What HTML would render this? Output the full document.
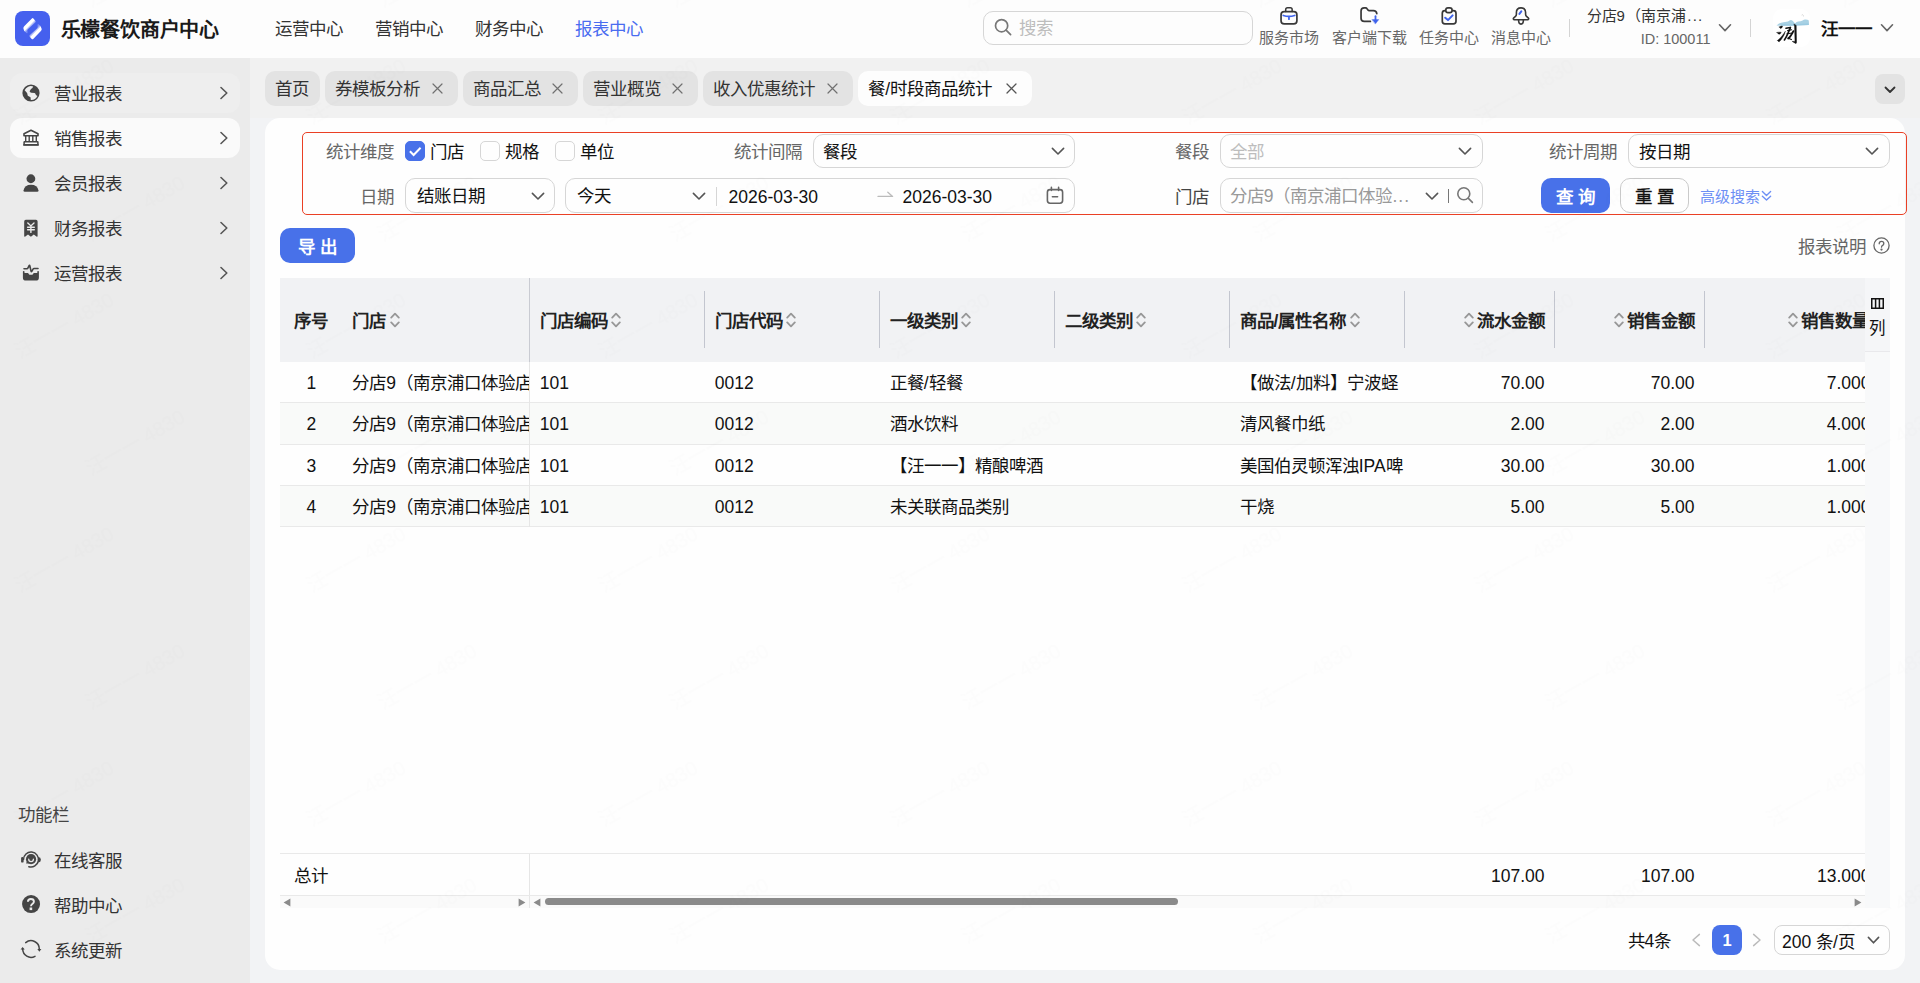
<!DOCTYPE html>
<html lang="zh-CN">
<head>
<meta charset="utf-8">
<title>餐/时段商品统计</title>
<style>
*{box-sizing:border-box;margin:0;padding:0}
html,body{width:1920px;height:983px;overflow:hidden}
body{text-spacing-trim:space-all;font-family:"Liberation Sans",sans-serif;font-size:17.5px;color:#222;background:#f1f1f1;position:relative}
.abs{position:absolute}
svg{display:block}
/* ---------- header ---------- */
#hdr{position:absolute;left:0;top:0;width:1920px;height:58px;background:#fdfdfd}
#logo{position:absolute;left:15px;top:10.7px;width:35px;height:35.3px;border-radius:8px;background:#4560ee}
#brand{position:absolute;left:60.5px;top:12.8px;height:35px;line-height:35px;font-size:20px;font-weight:bold;color:#1a1a1a;letter-spacing:-0.2px;white-space:nowrap}
.nav{position:absolute;top:11.8px;height:35px;line-height:35px;font-size:17.5px;color:#333;white-space:nowrap}
.nav.on{color:#4a6cf0}
#search{position:absolute;left:983px;top:11px;width:270px;height:34px;border:1px solid #d6d6d6;border-radius:10px;background:#fdfdfd}
#search span{position:absolute;left:35px;top:.2px;line-height:32px;color:#bdbdbd;font-size:17.5px}
.hi{position:absolute;top:0;height:58px;text-align:center;font-size:15px;color:#666;white-space:nowrap}
.hi svg{position:absolute;top:6px;left:50%;margin-left:-10px}
.hi span{position:absolute;left:0;right:0;top:28px;line-height:20px;color:#686868}
.vdiv{position:absolute;top:19px;width:1px;height:18px;background:#d4d4d4}
/* ---------- sidebar ---------- */
#side{position:absolute;left:0;top:58px;width:250px;height:925px;background:#ebebeb}
.mi{position:absolute;left:10px;width:230px;height:40px;border-radius:12px;line-height:40px;color:#333;font-size:17.5px}
.mi .ic{position:absolute;left:10.5px;top:10.25px;width:20px;height:20px}
.mi .tx{position:absolute;left:43.5px;top:.75px}
.mi .ar{position:absolute;left:208.8px;top:13.3px}
.mi.hov{background:#eeeeee}
.mi.act{background:#fafafa}
/* ---------- tabs ---------- */
.tab{position:absolute;top:71px;height:35px;line-height:37px;border-radius:10px;background:#e3e3e3;color:#333;padding-left:10.3px;font-size:17.5px;white-space:nowrap}
.tab.on{background:#fdfdfd;color:#111}
.tab svg{position:absolute;right:15px;top:12px}
/* ---------- content ---------- */
#cbg{position:absolute;left:250px;top:118px;width:1670px;height:865px;background:#f2f3f5}
#card{position:absolute;left:265px;top:118px;width:1640px;height:852px;background:#fefefe;border-radius:15px}

/* ---------- filter ---------- */
#fbox{position:absolute;left:302px;top:132px;width:1605px;height:83px;border:1px solid #ea4025;border-radius:5px}
.lb{position:absolute;height:34px;line-height:34px;font-size:17.5px;color:#666;white-space:nowrap;text-align:right}
.sel{position:absolute;height:34px;border:1px solid #d6d6d6;border-radius:10px;background:#fefefe;line-height:32px;font-size:17.5px;color:#111;white-space:nowrap}
.sel .t{position:absolute;left:10.5px;top:0}
.sel.r1 .t{top:1px}
.sel.r2 .t{top:1.3px}
.sel.r1 .cv{top:12.4px}
.sel.r2 .cv{top:12.4px}
.sel .cv{position:absolute;top:12px}
.cb{position:absolute;top:141px;width:20px;height:20px;border:1px solid #d6d6d6;border-radius:5px;background:#fefefe}
.cb.on{background:#4871e9;border-color:#4871e9}
.cbt{position:absolute;top:134.75px;line-height:34px;font-size:17.5px;color:#111}
.btn{position:absolute;height:35px;line-height:38.5px;border-radius:10px;font-size:17.5px;font-weight:bold;text-align:center;white-space:pre}
.btn.pri{background:#4871e9;color:#fff}
.btn.def{background:#fefefe;border:1px solid #cacaca;color:#111;line-height:36.5px;font-weight:normal;-webkit-text-stroke:.4px #111}

/* ---------- table ---------- */
#thead{position:absolute;left:280px;top:278px;width:1584.5px;height:84px;background:#f1f2f4;overflow:hidden}
.th{position:absolute;top:0;height:84px;line-height:86.2px;font-size:17.5px;font-weight:bold;color:#222;white-space:nowrap}
.th.r{text-align:right}
.srt{display:inline-block;width:10px;height:16px;vertical-align:-.5px;margin:0 3px 0 3.6px}
.csep{position:absolute;top:13px;width:1px;height:57px;background:#c3c6cf}
#tbody{position:absolute;left:280px;top:362px;width:1584.5px;height:165px;overflow:hidden}
.tr{position:absolute;left:0;width:1584.5px;height:41.25px;border-bottom:1px solid #e9e9e9;background:#fefefe}
.tr.alt{background:#f9faf9}
.td{position:absolute;top:0;height:41px;line-height:43.5px;font-size:17.5px;color:#111;white-space:nowrap;overflow:hidden}
.td.r{text-align:right}
.td.c{text-align:center}
#tfoot{position:absolute;left:280px;top:853px;width:1584.5px;height:42.5px;border-top:1px solid #e9e9e9;border-bottom:1px solid #e9e9e9;overflow:hidden}
#tfoot .td{line-height:44.2px}
#colset{position:absolute;left:1864.5px;top:278px;width:25.5px;height:630px;background:#f8f9fa}
#colset .top{position:absolute;left:0;top:0;width:25.5px;height:74px;background:#f5f6f8;border-bottom:1px solid #e9e9ec}
</style>
</head>
<body>
<div id="hdr">
  <div id="logo"><svg width="35" height="35" viewBox="0 0 35 35">
    <defs><linearGradient id="lg1" gradientUnits="userSpaceOnUse" x1="13" y1="11.4" x2="16.8" y2="15.1"><stop offset="0" stop-color="#fff"/><stop offset=".58" stop-color="#fff"/><stop offset=".64" stop-color="#fff" stop-opacity=".8"/><stop offset="1" stop-color="#fff" stop-opacity=".3"/></linearGradient>
    <linearGradient id="lg2" gradientUnits="userSpaceOnUse" x1="23.6" y1="23.9" x2="19.1" y2="19.4"><stop offset="0" stop-color="#fff"/><stop offset=".45" stop-color="#fff"/><stop offset="1" stop-color="#fff" stop-opacity=".25"/></linearGradient></defs>
    <path id="lf" d="M16.9 7.4 Q17.65 6.7 18.4 7.5 L20.5 9.9 Q21.2 10.7 20.4 11.4 L12.9 18.2 Q12.4 18.7 12.45 19.6 L12.5 21.6 Q12.5 22.6 11.6 22.1 Q8.6 20.4 8.4 17.4 Q8.3 16.2 9.2 15.3Z" fill="url(#lg1)"/>
    <path d="M16.9 7.4 Q17.65 6.7 18.4 7.5 L20.5 9.9 Q21.2 10.7 20.4 11.4 L12.9 18.2 Q12.4 18.7 12.45 19.6 L12.5 21.6 Q12.5 22.6 11.6 22.1 Q8.6 20.4 8.4 17.4 Q8.3 16.2 9.2 15.3Z" fill="url(#lg1)" transform="rotate(180 17.55 17.7)"/>
  </svg></div>
  <div id="brand">乐檬餐饮商户中心</div>
  <div class="nav" style="left:275px">运营中心</div>
  <div class="nav" style="left:375px">营销中心</div>
  <div class="nav" style="left:475px">财务中心</div>
  <div class="nav on" style="left:575px">报表中心</div>
  <div id="search">
    <svg class="abs" style="left:10.3px;top:6.4px" width="18" height="18" viewBox="0 0 18 18" fill="none" stroke="#777" stroke-width="1.7" stroke-linecap="round"><circle cx="7.6" cy="7.7" r="6.1"/><path d="M12.1 12.2 L16.6 16.7"/></svg>
    <span>搜索</span>
  </div>
  <div class="hi" style="left:1259px;width:60px">
    <svg width="20" height="20" viewBox="0 0 20 20" fill="none" stroke="#383838" stroke-width="1.7" stroke-linejoin="round" stroke-linecap="round"><rect x="2.05" y="5.7" width="15.85" height="12.15" rx="3.2"/><path d="M6.7 5.6 V3.6 Q6.7 1.8 8.5 1.8 H11.4 Q13.15 1.8 13.15 3.6 V5.6" stroke-width="1.5"/><path d="M4.3 9.5 Q9.9 11.3 15.7 9.5 M9.95 10.8 V13.2" stroke="#3f63ec" stroke-width="1.8"/></svg>
    <span>服务市场</span></div>
  <div class="hi" style="left:1331.5px;width:75px">
    <svg width="20" height="20" viewBox="0 0 20 20" style="overflow:visible" fill="none" stroke="#383838" stroke-width="1.7" stroke-linejoin="round" stroke-linecap="round"><path d="M11.4 15.4 H5.2 Q2.05 15.4 2.05 12.2 V5 Q2.05 1.9 5.2 1.9 H6.4 Q7.6 1.9 8.2 2.9 L9.2 4.3 Q9.5 4.7 10.2 4.7 H14.4 Q17.4 4.7 17.8 7.6"/><path d="M16.5 10.2 V15" stroke="#3f63ec" stroke-width="1.8"/><path d="M13.2 13.6 H19.8 L16.5 17.8Z" fill="#3f63ec" stroke="#3f63ec" stroke-width=".4"/></svg>
    <span>客户端下载</span></div>
  <div class="hi" style="left:1419px;width:60px">
    <svg width="20" height="20" viewBox="0 0 20 20" fill="none" stroke="#383838" stroke-width="1.7" stroke-linejoin="round" stroke-linecap="round"><rect x="3.3" y="4.6" width="13.7" height="13.3" rx="2.6"/><rect x="6.8" y="1.9" width="6.25" height="4.7" rx="2.2" fill="#fdfdfd"/><path d="M6.2 11.7 L9 14.1 L13.6 9.4" stroke="#3f63ec" stroke-width="2"/></svg>
    <span>任务中心</span></div>
  <div class="hi" style="left:1491px;width:60px">
    <svg width="20" height="20" viewBox="0 0 20 20" fill="none" stroke="#383838" stroke-width="1.6" stroke-linejoin="round" stroke-linecap="round"><path d="M10 1.9 Q5.4 1.9 5.4 6.6 V8.2 Q5.4 9.6 4.2 10.6 L2.8 11.8 Q1.8 12.8 2.8 13.5 Q3.2 13.75 4 13.75 H16 Q16.8 13.75 17.2 13.5 Q18.2 12.8 17.2 11.8 L15.8 10.6 Q14.6 9.6 14.6 8.2 V6.6 Q14.6 1.9 10 1.9Z"/><path d="M7.6 14 Q7.6 18.1 10 18.1 Q12.4 18.1 12.4 14"/><path d="M10.3 5.4 L8.4 7.9" stroke="#3f63ec" stroke-width="2"/></svg>
    <span>消息中心</span></div>
  <div class="vdiv" style="left:1569px"></div>
  <div class="abs" style="left:1586.5px;top:5.2px;line-height:21px;font-size:15px;color:#333;white-space:nowrap">分店9<span style="margin-left:1.5px">（南京浦</span><span style="letter-spacing:1.2px;margin-left:1px">...</span></div>
  <div class="abs" style="right:209.5px;top:29.3px;line-height:21px;font-size:14.5px;color:#666;white-space:nowrap">ID: 100011</div>
  <svg class="abs" style="left:1718px;top:23px" width="14" height="10" viewBox="0 0 14 10" fill="none" stroke="#666" stroke-width="1.6" stroke-linecap="round" stroke-linejoin="round"><path d="M1.5 1.8 L7 7.6 L12.5 1.8"/></svg>
  <div class="vdiv" style="left:1750px"></div>
  <div class="abs" style="left:1773px;top:9px;width:36.5px;height:38px;border-radius:9px;background:#fff;overflow:hidden">
    <svg width="36.5" height="38" viewBox="0 0 36.5 38">
      <path d="M3.5 16.5 L6 14.6 Q8 13.4 10.5 13.2 L15 12.6 Q16.6 11.2 17.9 11.1 Q19.4 11.4 20.3 12.6 L22 14.4 Q23.6 12.8 25.2 12.6 Q27.6 12.4 29.6 11.6 Q30.8 10.7 32 10.6 Q34 10.4 35.4 11.1 Q36 12.2 35.9 13.5 V16 Q30 16.4 24 16.6 Q14 17 3.5 16.5Z" fill="#a8d1e4"/>
      <path d="M8 15.4 Q16 14.6 22 15.6 Q30 14.4 35.8 14.6 V16 Q22 17 8 16.7Z" fill="#96c8df" opacity=".7"/>
      <path d="M28.6 6.2 L29.6 5.6 L30.2 6.6 M30 6.8 L31 7.2" stroke="#bbb" stroke-width=".5" fill="none"/>
      <g fill="#111" stroke="#111" stroke-linecap="round" stroke-linejoin="round">
        <path d="M6.4 18 Q8 16.6 9.6 17.2 Q9.4 18.8 7.6 19.6 Q6.8 19 6.4 18Z" stroke-width=".4"/>
        <path d="M4 23.4 Q6 23 8.2 23.2 Q7.6 25 6.2 25.3 Q4.8 24.8 4 23.4Z" stroke-width=".4"/>
        <path d="M4.6 31.4 Q7 29.6 9 27 Q10.8 24.6 12.4 22.2 Q11.6 25.6 9.6 28.6 Q8 31.4 6.2 32.8 Q5 32.6 4.6 31.4Z" stroke-width=".4"/>
        <path d="M13 19.3 L17.4 18.4" stroke-width="1.5" fill="none"/>
        <path d="M17.4 18.6 Q15.6 23 14 26.4 Q12.8 29 11.4 31" stroke-width="1.6" fill="none"/>
        <path d="M20.4 22.2 Q18.8 25.4 17.4 27.2 Q16.4 28.6 15.2 29.4" stroke-width="1.9" fill="none"/>
        <path d="M14.6 21.6 L18.6 20.8 M14 24.8 L19.6 24 M15.4 29.2 L18.4 30.6" stroke-width="1.1" fill="none"/>
        <path d="M21.2 15.2 L23.2 16.4 L23.5 33.4 Q23.4 34.6 22.6 34.4 L19.2 32.4 L22 32.4 L21.6 17.4Z" stroke-width=".5"/>
      </g>
    </svg>
  </div>
  <div class="abs" style="left:1820.5px;top:11.7px;line-height:35px;font-size:17.5px;font-weight:bold;color:#111;white-space:nowrap">汪一一</div>
  <svg class="abs" style="left:1880px;top:23px" width="14" height="10" viewBox="0 0 14 10" fill="none" stroke="#666" stroke-width="1.6" stroke-linecap="round" stroke-linejoin="round"><path d="M1.5 1.8 L7 7.6 L12.5 1.8"/></svg>
</div>
<div id="side">
  <div class="mi hov" style="top:15px">
    <svg class="ic" viewBox="0 0 20 20"><circle cx="10" cy="10" r="8.6" fill="#454545"/><path d="M3.65 7.25 A6.9 6.9 0 0 1 12.2 3.5 L11.4 5 L10 6 L8.6 8.2 Q8.8 9.6 10.4 9.7 L13.6 9.9 Q14.6 10.4 14.9 12 L16.4 13 A6.9 6.9 0 0 1 9.8 16.9 L9.5 14.3 L6.8 12.8 L6.1 10 Z" fill="#eeeeee"/></svg>
    <span class="tx">营业报表</span>
    <svg class="ar" width="10" height="14" viewBox="0 0 10 14" fill="none" stroke="#555" stroke-width="1.6" stroke-linecap="round" stroke-linejoin="round"><path d="M2 1.5 L7.8 7 L2 12.5"/></svg>
  </div>
  <div class="mi act" style="top:60px">
    <svg class="ic" viewBox="0 0 20 20" fill="none" stroke="#454545" stroke-linejoin="round" stroke-linecap="round"><path d="M10 2.3 L17 5.7 V7.7 H3 V5.7Z" stroke-width="1.6"/><path d="M4.7 8 V13.4 M8.2 8 V13.4 M11.8 8 V13.4 M15.3 8 V13.4" stroke-width="1.4" stroke-linecap="butt"/><rect x="3.1" y="13.8" width="13.8" height="3" rx=".5" stroke-width="1.5"/><path d="M3 16.9 H17" stroke-width="1.9"/></svg>
    <span class="tx">销售报表</span>
    <svg class="ar" width="10" height="14" viewBox="0 0 10 14" fill="none" stroke="#555" stroke-width="1.6" stroke-linecap="round" stroke-linejoin="round"><path d="M2 1.5 L7.8 7 L2 12.5"/></svg>
  </div>
  <div class="mi" style="top:105px">
    <svg class="ic" viewBox="0 0 20 20"><circle cx="9.9" cy="5.75" r="4.4" fill="#454545"/><path d="M2.5 17.4 Q3.6 11.7 10 11.7 Q16.4 11.7 17.5 17.4 Q17.6 18.7 16.2 18.7 H3.8 Q2.4 18.7 2.5 17.4Z" fill="#454545"/></svg>
    <span class="tx">会员报表</span>
    <svg class="ar" width="10" height="14" viewBox="0 0 10 14" fill="none" stroke="#555" stroke-width="1.6" stroke-linecap="round" stroke-linejoin="round"><path d="M2 1.5 L7.8 7 L2 12.5"/></svg>
  </div>
  <div class="mi" style="top:150px">
    <svg class="ic" viewBox="0 0 20 20"><path d="M3.2 3.4 Q3.2 1.8 4.8 1.8 H15 Q16.6 1.8 16.6 3.4 V18 Q16.6 18.9 15.8 18.7 L12.8 16.4 L9.9 18.8 L7 16.4 L4 18.7 Q3.2 18.9 3.2 18Z" fill="#454545"/><path d="M6.8 5 L9.9 7.9 L13 5 M9.9 7.9 V14.4 M6.6 9.3 H13.3 M6.6 11.8 H13.3" fill="none" stroke="#ebebeb" stroke-width="1.4" stroke-linecap="round"/></svg>
    <span class="tx">财务报表</span>
    <svg class="ar" width="10" height="14" viewBox="0 0 10 14" fill="none" stroke="#555" stroke-width="1.6" stroke-linecap="round" stroke-linejoin="round"><path d="M2 1.5 L7.8 7 L2 12.5"/></svg>
  </div>
  <div class="mi" style="top:195px">
    <svg class="ic" viewBox="0 0 20 20"><path d="M1.9 8.6 Q1.9 7.9 2.7 7.9 Q3.5 7.9 3.5 8.6 V10 H7 L8.4 11.8 H11.4 L12.8 10 H16.3 V8.6 Q16.3 7.9 17.1 7.9 Q17.9 7.9 17.9 8.6 V14.4 Q17.9 17.6 14.7 17.6 H5.1 Q1.9 17.6 1.9 14.4Z" fill="#454545"/><path d="M3 5.75 H6 Q6.6 5.75 7 4.9 L8.1 2.6 Q8.5 1.9 8.8 2.8 L10.1 8.4 Q10.3 9.2 10.8 8.4 L12.2 5.9 Q12.5 5.45 13 5.45 H17" fill="none" stroke="#454545" stroke-width="1.6" stroke-linecap="round" stroke-linejoin="round"/></svg>
    <span class="tx">运营报表</span>
    <svg class="ar" width="10" height="14" viewBox="0 0 10 14" fill="none" stroke="#555" stroke-width="1.6" stroke-linecap="round" stroke-linejoin="round"><path d="M2 1.5 L7.8 7 L2 12.5"/></svg>
  </div>
  <div class="abs" style="left:17.7px;top:745px;line-height:24px;font-size:17.5px;color:#444">功能栏</div>
  <div class="mi" style="top:782px">
    <svg class="ic" viewBox="0 0 20 20" style="overflow:visible"><path d="M2.5 9.5 A7.5 7.5 0 1 1 7.8 16.7" fill="none" stroke="#454545" stroke-width="1.5" stroke-linecap="round"/><rect x=".1" y="7" width="2.5" height="5.6" rx="1.2" fill="#454545"/><path d="M17.3 6.9 Q19.9 7.2 19.9 9.7 Q19.9 12.2 17.3 12.5Z" fill="#454545"/><circle cx="10.05" cy="9.2" r="5.1" fill="#454545"/><path d="M5.8 11.4 L5.1 13.6 L8.4 13.6Z" fill="#454545"/><path d="M7.7 9.2 Q7.7 11.5 10.05 11.5 Q12.4 11.5 12.4 9.2" fill="none" stroke="#ebebeb" stroke-width="1.25" stroke-linecap="round"/></svg>
    <span class="tx">在线客服</span>
  </div>
  <div class="mi" style="top:827px">
    <svg class="ic" viewBox="0 0 20 20" style="overflow:visible"><circle cx="10.05" cy="9.1" r="9" fill="#454545"/><path d="M6.9 6.8 Q7 4 9.9 4 Q12.9 4 12.9 6.5 Q12.9 7.6 11.8 8.6 Q10 10 9.95 11.2" fill="none" stroke="#ebebeb" stroke-width="1.9" stroke-linecap="butt"/><rect x="8.6" y="12.5" width="2.6" height="2.6" fill="#ebebeb"/></svg>
    <span class="tx">帮助中心</span>
  </div>
  <div class="mi" style="top:872px">
    <svg class="ic" viewBox="0 0 20 20" style="overflow:visible" fill="none" stroke="#454545" stroke-width="1.5" stroke-linecap="round"><path d="M4.7 2.6 A8.3 8.3 0 0 1 18.3 9.1"/><path d="M1.7 9.1 A8.3 8.3 0 0 0 14 16.3"/><path d="M16.3 9.1 H20.4 L18.35 11.7Z" fill="#454545" stroke="none"/><path d="M-.4 9.4 H3.7 L1.65 6.9Z" fill="#454545" stroke="none"/></svg>
    <span class="tx">系统更新</span>
  </div>
</div>
<!-- tabs -->
<div class="tab" style="left:265px;width:55px">首页</div>
<div class="tab" style="left:325px;width:133px">券模板分析<svg width="11" height="11" viewBox="0 0 11 11" stroke="#707070" stroke-width="1.2" stroke-linecap="round"><path d="M1 1 L10 10 M10 1 L1 10"/></svg></div>
<div class="tab" style="left:463px;width:115px">商品汇总<svg width="11" height="11" viewBox="0 0 11 11" stroke="#707070" stroke-width="1.2" stroke-linecap="round"><path d="M1 1 L10 10 M10 1 L1 10"/></svg></div>
<div class="tab" style="left:583px;width:115px">营业概览<svg width="11" height="11" viewBox="0 0 11 11" stroke="#707070" stroke-width="1.2" stroke-linecap="round"><path d="M1 1 L10 10 M10 1 L1 10"/></svg></div>
<div class="tab" style="left:703px;width:150px">收入优惠统计<svg width="11" height="11" viewBox="0 0 11 11" stroke="#707070" stroke-width="1.2" stroke-linecap="round"><path d="M1 1 L10 10 M10 1 L1 10"/></svg></div>
<div class="tab on" style="left:858px;width:174px">餐/时段商品统计<svg width="11" height="11" viewBox="0 0 11 11" stroke="#555" stroke-width="1.3" stroke-linecap="round"><path d="M1 1 L10 10 M10 1 L1 10"/></svg></div>
<div class="abs" style="left:1875px;top:74px;width:30px;height:30px;border-radius:8px;background:#e3e3e3">
  <svg class="abs" style="left:9px;top:12px" width="12" height="8" viewBox="0 0 12 8" fill="none" stroke="#333" stroke-width="1.8" stroke-linecap="round" stroke-linejoin="round"><path d="M1.5 1.5 L6 6 L10.5 1.5"/></svg>
</div>
<div id="cbg"></div>
<div id="card"></div>
<div id="fbox"></div>
<!-- filter row 1 -->
<div class="lb" style="left:299.5px;width:94.5px;top:134.75px">统计维度</div>
<div class="cb on" style="left:405px"><svg width="18" height="18" viewBox="0 0 18 18" fill="none" stroke="#fff" stroke-width="2" stroke-linecap="butt" stroke-linejoin="miter"><path d="M3.9 9.3 L7.6 13 L14.6 5.7"/></svg></div>
<div class="cbt" style="left:429.75px">门店</div>
<div class="cb" style="left:480px"></div>
<div class="cbt" style="left:504.75px">规格</div>
<div class="cb" style="left:555px"></div>
<div class="cbt" style="left:579.75px">单位</div>
<div class="lb" style="left:699.5px;width:102.5px;top:134.75px">统计间隔</div>
<div class="sel r1" style="left:813px;top:133.6px;width:262px"><span class="t" style="left:9px">餐段</span><svg class="cv" style="left:236.5px" width="14" height="9" viewBox="0 0 14 9" fill="none" stroke="#555" stroke-width="1.6" stroke-linecap="round" stroke-linejoin="round"><path d="M1.4 1.4 L7 7 L12.6 1.4"/></svg></div>
<div class="lb" style="left:1109px;width:99.5px;top:134.75px">餐段</div>
<div class="sel r1" style="left:1220px;top:133.6px;width:263px"><span class="t" style="left:8.5px;color:#bdbdbd">全部</span><svg class="cv" style="left:236.5px" width="14" height="9" viewBox="0 0 14 9" fill="none" stroke="#555" stroke-width="1.6" stroke-linecap="round" stroke-linejoin="round"><path d="M1.4 1.4 L7 7 L12.6 1.4"/></svg></div>
<div class="lb" style="left:1519.5px;width:97px;top:134.75px">统计周期</div>
<div class="sel r1" style="left:1627.5px;top:133.6px;width:262.5px"><span class="t">按日期</span><svg class="cv" style="left:236.5px" width="14" height="9" viewBox="0 0 14 9" fill="none" stroke="#555" stroke-width="1.6" stroke-linecap="round" stroke-linejoin="round"><path d="M1.4 1.4 L7 7 L12.6 1.4"/></svg></div>
<!-- filter row 2 -->
<div class="lb" style="left:299px;width:94.5px;top:179.6px">日期</div>
<div class="sel r2" style="left:405px;top:178.2px;width:150px;height:34.4px"><span class="t">结账日期</span><svg class="cv" style="left:124.5px" width="14" height="9" viewBox="0 0 14 9" fill="none" stroke="#555" stroke-width="1.6" stroke-linecap="round" stroke-linejoin="round"><path d="M1.4 1.4 L7 7 L12.6 1.4"/></svg></div>
<div class="sel r2" style="left:565px;top:178.2px;width:510px;height:34.4px"><span class="t">今天</span><svg class="cv" style="left:125.7px" width="14" height="9" viewBox="0 0 14 9" fill="none" stroke="#555" stroke-width="1.6" stroke-linecap="round" stroke-linejoin="round"><path d="M1.4 1.4 L7 7 L12.6 1.4"/></svg>
  <div class="abs" style="left:150px;top:7.5px;width:1px;height:19px;background:#d6d6d6"></div>
  <span class="abs" style="left:162.5px;top:1.6px;color:#111">2026-03-30</span>
  <svg class="abs" style="left:311px;top:10px" width="17" height="10" viewBox="0 0 17 10" fill="none" stroke="#bbb" stroke-width="1.3" stroke-linecap="round" stroke-linejoin="round"><path d="M1 7.4 H15.6 L10.8 3.2"/></svg>
  <span class="abs" style="left:336.5px;top:1.6px;color:#111">2026-03-30</span>
  <svg class="abs" style="left:480px;top:7px" width="18" height="19" viewBox="0 0 18 19" fill="none" stroke="#666" stroke-width="1.6" stroke-linecap="round" stroke-linejoin="round"><rect x="1.4" y="3.6" width="15.2" height="13.6" rx="2.6"/><path d="M5.4 1.4 V4.4 M12.6 1.4 V4.4 M6.4 10.8 H11.6"/></svg>
</div>
<div class="lb" style="left:1109px;width:99.5px;top:180px;color:#444">门店</div>
<div class="sel r2" style="left:1220px;top:178.2px;width:263px;height:34.4px"><span class="t" style="left:8.75px;color:#999">分店9（南京浦口体验<span style="letter-spacing:1px">...</span></span><svg class="cv" style="left:203.7px" width="14" height="9" viewBox="0 0 14 9" fill="none" stroke="#555" stroke-width="1.6" stroke-linecap="round" stroke-linejoin="round"><path d="M1.4 1.4 L7 7 L12.6 1.4"/></svg>
  <div class="abs" style="left:227px;top:10px;width:1px;height:14px;background:#777"></div>
  <svg class="abs" style="left:235px;top:7px" width="18" height="18" viewBox="0 0 18 18" fill="none" stroke="#777" stroke-width="1.6" stroke-linecap="round"><circle cx="7.8" cy="7.8" r="6"/><path d="M12.4 12.4 L16.4 16.4"/></svg>
</div>
<div class="btn pri" style="left:1541px;top:178px;width:69px">查 询</div>
<div class="btn def" style="left:1620px;top:178px;width:69px">重 置</div>
<div class="abs" style="left:1700px;top:178.5px;line-height:35px;font-size:15px;color:#6d8ff5;white-space:nowrap">高级搜索</div>
<svg class="abs" style="left:1760.5px;top:190px" width="11" height="12" viewBox="0 0 11 12" fill="none" stroke="#6d8ff5" stroke-width="1.4" stroke-linecap="round" stroke-linejoin="round"><path d="M1.4 1.6 L5.5 5.4 L9.6 1.6 M1.4 6.2 L5.5 10 L9.6 6.2"/></svg>
<!-- export row -->
<div class="btn pri" style="left:280px;top:228px;width:75px">导 出</div>
<div class="abs" style="left:1798px;top:229.6px;line-height:35px;font-size:17.5px;color:#666;white-space:nowrap">报表说明</div>
<svg class="abs" style="left:1873px;top:237px" width="17" height="17" viewBox="0 0 17 17" fill="none" stroke="#666" stroke-width="1.3" stroke-linecap="round"><circle cx="8.5" cy="8.5" r="7.6"/><path d="M6.2 6.8 Q6.2 4.4 8.5 4.4 Q10.8 4.4 10.8 6.4 Q10.8 7.6 9.6 8.4 Q8.5 9 8.5 10.2"/><circle cx="8.5" cy="12.6" r=".5" fill="#8a8a8a"/></svg>
<div id="thead"><div class="th" style="left:14px">序号</div><div class="th" style="left:72.0px">门店<svg class="srt" viewBox="0 0 10 16" fill="none" stroke="#979797" stroke-width="1.8" stroke-linecap="round" stroke-linejoin="round"><path d="M1.2 5.6 L5 1.6 L8.8 5.6 M1.2 10.4 L5 14.4 L8.8 10.4"/></svg></div><div class="th" style="left:259.5px">门店编码<svg class="srt" viewBox="0 0 10 16" fill="none" stroke="#979797" stroke-width="1.8" stroke-linecap="round" stroke-linejoin="round"><path d="M1.2 5.6 L5 1.6 L8.8 5.6 M1.2 10.4 L5 14.4 L8.8 10.4"/></svg></div><div class="th" style="left:434.5px">门店代码<svg class="srt" viewBox="0 0 10 16" fill="none" stroke="#979797" stroke-width="1.8" stroke-linecap="round" stroke-linejoin="round"><path d="M1.2 5.6 L5 1.6 L8.8 5.6 M1.2 10.4 L5 14.4 L8.8 10.4"/></svg></div><div class="th" style="left:609.5px">一级类别<svg class="srt" viewBox="0 0 10 16" fill="none" stroke="#979797" stroke-width="1.8" stroke-linecap="round" stroke-linejoin="round"><path d="M1.2 5.6 L5 1.6 L8.8 5.6 M1.2 10.4 L5 14.4 L8.8 10.4"/></svg></div><div class="th" style="left:784.5px">二级类别<svg class="srt" viewBox="0 0 10 16" fill="none" stroke="#979797" stroke-width="1.8" stroke-linecap="round" stroke-linejoin="round"><path d="M1.2 5.6 L5 1.6 L8.8 5.6 M1.2 10.4 L5 14.4 L8.8 10.4"/></svg></div><div class="th" style="left:959.5px">商品/属性名称<svg class="srt" viewBox="0 0 10 16" fill="none" stroke="#979797" stroke-width="1.8" stroke-linecap="round" stroke-linejoin="round"><path d="M1.2 5.6 L5 1.6 L8.8 5.6 M1.2 10.4 L5 14.4 L8.8 10.4"/></svg></div><div class="th r" style="right:320.0px"><svg class="srt" viewBox="0 0 10 16" fill="none" stroke="#979797" stroke-width="1.8" stroke-linecap="round" stroke-linejoin="round"><path d="M1.2 5.6 L5 1.6 L8.8 5.6 M1.2 10.4 L5 14.4 L8.8 10.4"/></svg>流水金额</div><div class="th r" style="right:170.0px"><svg class="srt" viewBox="0 0 10 16" fill="none" stroke="#979797" stroke-width="1.8" stroke-linecap="round" stroke-linejoin="round"><path d="M1.2 5.6 L5 1.6 L8.8 5.6 M1.2 10.4 L5 14.4 L8.8 10.4"/></svg>销售金额</div><div class="th" style="left:1504.5px"><svg class="srt" viewBox="0 0 10 16" fill="none" stroke="#979797" stroke-width="1.8" stroke-linecap="round" stroke-linejoin="round"><path d="M1.2 5.6 L5 1.6 L8.8 5.6 M1.2 10.4 L5 14.4 L8.8 10.4"/></svg>销售数量</div><div class="csep" style="left:424.0px"></div><div class="csep" style="left:599.0px"></div><div class="csep" style="left:774.0px"></div><div class="csep" style="left:949.0px"></div><div class="csep" style="left:1124.0px"></div><div class="csep" style="left:1274.0px"></div><div class="csep" style="left:1424.0px"></div><div class="abs" style="left:249px;top:0;width:1px;height:84px;background:#c9cbd2"></div></div>
<div id="tbody"><div class="tr" style="top:0.0px"><div class="td c" style="left:0;width:62.5px">1</div><div class="td" style="left:72.25px;width:176.5px">分店9（南京浦口体验店）</div><div class="td" style="left:259.75px;width:160px">101</div><div class="td" style="left:434.75px;width:160px">0012</div><div class="td" style="left:609.75px;width:190px">正餐/轻餐</div><div class="td" style="left:959.75px;width:164.5px">【做法/加料】宁波蛏</div><div class="td r" style="left:1135px;width:129.5px">70.00</div><div class="td r" style="left:1285px;width:129.5px">70.00</div><div class="td r" style="left:1435px;width:155.5px">7.000</div><div class="abs" style="left:249px;top:0;width:1px;height:42px;background:#e6e6e6"></div></div><div class="tr alt" style="top:41.25px"><div class="td c" style="left:0;width:62.5px">2</div><div class="td" style="left:72.25px;width:176.5px">分店9（南京浦口体验店）</div><div class="td" style="left:259.75px;width:160px">101</div><div class="td" style="left:434.75px;width:160px">0012</div><div class="td" style="left:609.75px;width:190px">酒水饮料</div><div class="td" style="left:959.75px;width:164.5px">清风餐巾纸</div><div class="td r" style="left:1135px;width:129.5px">2.00</div><div class="td r" style="left:1285px;width:129.5px">2.00</div><div class="td r" style="left:1435px;width:155.5px">4.000</div><div class="abs" style="left:249px;top:0;width:1px;height:42px;background:#e6e6e6"></div></div><div class="tr" style="top:82.5px"><div class="td c" style="left:0;width:62.5px">3</div><div class="td" style="left:72.25px;width:176.5px">分店9（南京浦口体验店）</div><div class="td" style="left:259.75px;width:160px">101</div><div class="td" style="left:434.75px;width:160px">0012</div><div class="td" style="left:609.75px;width:190px">【汪一一】精酿啤酒</div><div class="td" style="left:959.75px;width:164.5px">美国伯灵顿浑浊IPA啤</div><div class="td r" style="left:1135px;width:129.5px">30.00</div><div class="td r" style="left:1285px;width:129.5px">30.00</div><div class="td r" style="left:1435px;width:155.5px">1.000</div><div class="abs" style="left:249px;top:0;width:1px;height:42px;background:#e6e6e6"></div></div><div class="tr alt" style="top:123.75px"><div class="td c" style="left:0;width:62.5px">4</div><div class="td" style="left:72.25px;width:176.5px">分店9（南京浦口体验店）</div><div class="td" style="left:259.75px;width:160px">101</div><div class="td" style="left:434.75px;width:160px">0012</div><div class="td" style="left:609.75px;width:190px">未关联商品类别</div><div class="td" style="left:959.75px;width:164.5px">干烧</div><div class="td r" style="left:1135px;width:129.5px">5.00</div><div class="td r" style="left:1285px;width:129.5px">5.00</div><div class="td r" style="left:1435px;width:155.5px">1.000</div><div class="abs" style="left:249px;top:0;width:1px;height:42px;background:#e6e6e6"></div></div></div>
<div id="tfoot"><div class="td" style="left:14px;width:100px">总计</div><div class="td r" style="left:1135px;width:129.5px">107.00</div><div class="td r" style="left:1285px;width:129.5px">107.00</div><div class="td r" style="left:1435px;width:155.5px">13.000</div><div class="abs" style="left:249px;top:0;width:1px;height:42px;background:#e6e6e6"></div></div>
<div id="colset"><div class="top">
<svg class="abs" style="left:6.5px;top:20px" width="13" height="11" viewBox="0 0 13 11" fill="none" stroke="#111" stroke-width="1.5"><rect x=".75" y=".75" width="11.5" height="9.5"/><path d="M4.6 1 V10 M8.4 1 V10"/></svg>
<div class="abs" style="left:4.6px;top:40.2px;line-height:20px;font-size:16.5px;color:#111">列</div></div></div>
<div class="abs" style="left:280px;top:895.5px;width:1584.5px;height:12px;background:#fafafa"></div>
<div class="abs" style="left:529px;top:895.5px;width:1px;height:12px;background:#e6e6e6"></div>
<svg class="abs" style="left:283px;top:897.7px" width="8" height="9" viewBox="0 0 8 9"><path d="M7.4 .4 V8.6 L.6 4.5Z" fill="#8a8a8a"/></svg>
<svg class="abs" style="left:518px;top:897.7px" width="8" height="9" viewBox="0 0 8 9"><path d="M.6 .4 V8.6 L7.4 4.5Z" fill="#8a8a8a"/></svg>
<svg class="abs" style="left:533px;top:897.7px" width="8" height="9" viewBox="0 0 8 9"><path d="M7.4 .4 V8.6 L.6 4.5Z" fill="#8a8a8a"/></svg>
<svg class="abs" style="left:1853.8px;top:897.7px" width="8" height="9" viewBox="0 0 8 9"><path d="M.6 .4 V8.6 L7.4 4.5Z" fill="#8a8a8a"/></svg>
<div class="abs" style="left:545px;top:898.3px;width:633px;height:7px;border-radius:4px;background:#8a8a8a"></div>
<div class="abs" style="left:1627.5px;top:925.8px;line-height:30px;font-size:17.5px;color:#111;white-space:nowrap">共4条</div>
<svg class="abs" style="left:1691px;top:933px" width="10" height="14" viewBox="0 0 10 14" fill="none" stroke="#bbb" stroke-width="1.5" stroke-linecap="round" stroke-linejoin="round"><path d="M8.4 1.4 L2 7 L8.4 12.6"/></svg>
<div class="abs" style="left:1712px;top:925px;width:30px;height:30px;border-radius:8px;background:#4871e9;color:#fff;font-weight:bold;text-align:center;line-height:30px;font-size:16.5px">1</div>
<svg class="abs" style="left:1752px;top:933px" width="10" height="14" viewBox="0 0 10 14" fill="none" stroke="#bbb" stroke-width="1.5" stroke-linecap="round" stroke-linejoin="round"><path d="M1.6 1.4 L8 7 L1.6 12.6"/></svg>
<div class="sel" style="left:1774px;top:925px;width:116px;height:30px;line-height:28px;border-radius:8px"><span class="t" style="left:7px;top:1.5px">200 条/页</span><svg class="abs" style="left:92px;top:10px" width="13" height="9" viewBox="0 0 13 9" fill="none" stroke="#555" stroke-width="1.6" stroke-linecap="round" stroke-linejoin="round"><path d="M1.4 1.4 L6.5 6.8 L11.6 1.4"/></svg></div>


<svg class="abs" style="left:0;top:0;pointer-events:none" width="1920" height="983"><defs><pattern id="wm" width="292" height="234" patternUnits="userSpaceOnUse"><g fill="#000" fill-opacity=".009" font-family="'Liberation Sans',sans-serif" font-size="20"><text transform="translate(20,125) rotate(-30)">汪一一 4830</text><text transform="translate(91,242) rotate(-30)">汪一一 4830</text><text transform="translate(91,8) rotate(-30)">汪一一 4830</text></g></pattern></defs><rect width="1920" height="983" fill="url(#wm)"/></svg>
</body>
</html>
